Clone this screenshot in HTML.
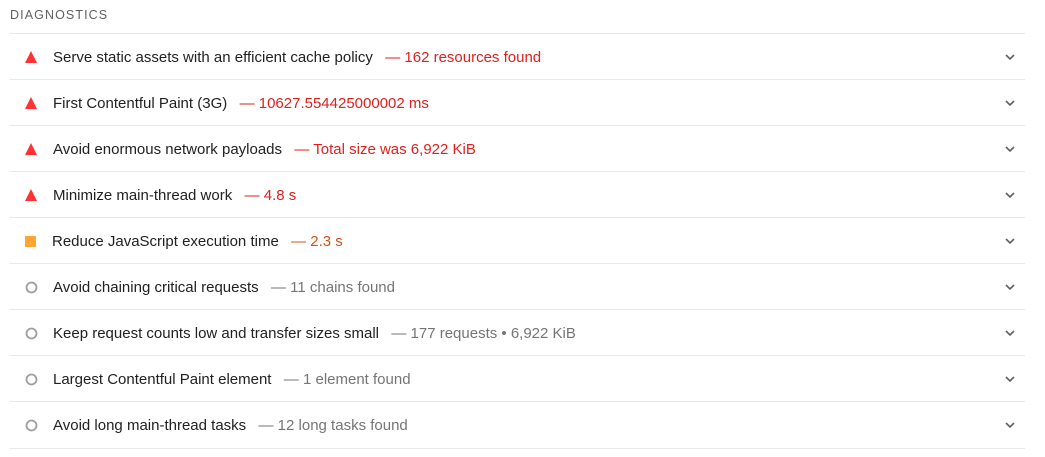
<!DOCTYPE html>
<html><head><style>
body{margin:0;background:#fff;font-family:"Liberation Sans",Arial,sans-serif;width:1045px;height:457px;overflow:hidden;position:relative}
.h{position:absolute;left:10px;top:8px;font-size:12.5px;letter-spacing:1.1px;color:#616161}
.row{position:absolute;left:10px;width:1015px;height:46px;border-top:1px solid #e8e8e8;font-size:15px;color:#212121}
.row .t{position:absolute;left:43px;top:15px;white-space:nowrap}
.ic{position:absolute;left:15px;top:17px}
.f,.a,.g{margin-left:4px}
.f{color:#e0201e}.a{color:#d4501c}.g{color:#757575}
.ch{position:absolute;left:994px;top:18px}
</style></head><body>
<div class="h">DIAGNOSTICS</div>
<div class="row" style="top:33px"><svg class="ic" width="12" height="12"><polygon points="6,0 12,12 0,12" fill="#f33"/></svg><span class="t">Serve static assets with an efficient cache policy <span class="f">&nbsp;— 162 resources found</span></span><svg class="ch" width="12" height="10"><path d="M2 3l4 4 4-4" stroke="#616161" stroke-width="1.6" fill="none"/></svg></div>
<div class="row" style="top:79px"><svg class="ic" width="12" height="12"><polygon points="6,0 12,12 0,12" fill="#f33"/></svg><span class="t">First Contentful Paint (3G) <span class="f">&nbsp;— 10627.554425000002 ms</span></span><svg class="ch" width="12" height="10"><path d="M2 3l4 4 4-4" stroke="#616161" stroke-width="1.6" fill="none"/></svg></div>
<div class="row" style="top:125px"><svg class="ic" width="12" height="12"><polygon points="6,0 12,12 0,12" fill="#f33"/></svg><span class="t">Avoid enormous network payloads <span class="f">&nbsp;— Total size was 6,922 KiB</span></span><svg class="ch" width="12" height="10"><path d="M2 3l4 4 4-4" stroke="#616161" stroke-width="1.6" fill="none"/></svg></div>
<div class="row" style="top:171px"><svg class="ic" width="12" height="12"><polygon points="6,0 12,12 0,12" fill="#f33"/></svg><span class="t">Minimize main-thread work <span class="f">&nbsp;— 4.8 s</span></span><svg class="ch" width="12" height="10"><path d="M2 3l4 4 4-4" stroke="#616161" stroke-width="1.6" fill="none"/></svg></div>
<div class="row" style="top:217px"><svg class="ic" width="12" height="12"><rect x="0" y="1" width="11" height="11" fill="#ffa632"/></svg><span class="t" style="left:42px">Reduce JavaScript execution time <span class="a">&nbsp;— 2.3 s</span></span><svg class="ch" width="12" height="10"><path d="M2 3l4 4 4-4" stroke="#616161" stroke-width="1.6" fill="none"/></svg></div>
<div class="row" style="top:263px"><svg class="ic" width="13" height="13"><circle cx="6.5" cy="6.5" r="5" stroke="#9e9e9e" stroke-width="1.8" fill="none"/></svg><span class="t">Avoid chaining critical requests <span class="g">&nbsp;— 11 chains found</span></span><svg class="ch" width="12" height="10"><path d="M2 3l4 4 4-4" stroke="#616161" stroke-width="1.6" fill="none"/></svg></div>
<div class="row" style="top:309px"><svg class="ic" width="13" height="13"><circle cx="6.5" cy="6.5" r="5" stroke="#9e9e9e" stroke-width="1.8" fill="none"/></svg><span class="t">Keep request counts low and transfer sizes small <span class="g">&nbsp;— 177 requests • 6,922 KiB</span></span><svg class="ch" width="12" height="10"><path d="M2 3l4 4 4-4" stroke="#616161" stroke-width="1.6" fill="none"/></svg></div>
<div class="row" style="top:355px"><svg class="ic" width="13" height="13"><circle cx="6.5" cy="6.5" r="5" stroke="#9e9e9e" stroke-width="1.8" fill="none"/></svg><span class="t">Largest Contentful Paint element <span class="g">&nbsp;— 1 element found</span></span><svg class="ch" width="12" height="10"><path d="M2 3l4 4 4-4" stroke="#616161" stroke-width="1.6" fill="none"/></svg></div>
<div class="row" style="top:401px;border-bottom:1px solid #e8e8e8"><svg class="ic" width="13" height="13"><circle cx="6.5" cy="6.5" r="5" stroke="#9e9e9e" stroke-width="1.8" fill="none"/></svg><span class="t">Avoid long main-thread tasks <span class="g">&nbsp;— 12 long tasks found</span></span><svg class="ch" width="12" height="10"><path d="M2 3l4 4 4-4" stroke="#616161" stroke-width="1.6" fill="none"/></svg></div>
</body></html>
